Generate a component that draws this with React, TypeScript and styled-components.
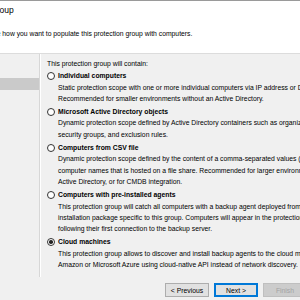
import styled, { createGlobalStyle } from "styled-components";

const GlobalStyle = createGlobalStyle`
  html, body {
    margin: 0;
    padding: 0;
    width: 300px;
    height: 300px;
    overflow: hidden;
    background: #f0f0f0;
  }
  #root {
    width: 300px;
    height: 300px;
    overflow: hidden;
  }
`;

const Window = styled.div`
  width: 514px;
  height: 300px;
  margin-left: -150px;
  display: flex;
  flex-direction: column;
  background: #f0f0f0;
  border-top: 1px solid #9a9a9a;
  font-family: "Liberation Sans", Arial, sans-serif;
  font-size: 6.8px;
  color: #000;
`;

const TitleBar = styled.div`
  height: 18px;
  display: flex;
  align-items: center;
  padding-left: 80px;
  background: #fff;
  font-size: 8.5px;
  white-space: nowrap;
`;

const Header = styled.div`
  background: #fff;
  height: 34px;
  border-bottom: 1px solid #dcdcdc;
  white-space: nowrap;
`;

const StepName = styled.div`
  padding-left: 110px;
  line-height: 9px;
  font-weight: bold;
`;

const StepText = styled.div`
  padding-left: 127px;
  line-height: 11px;
`;

const Main = styled.div`
  height: 223px;
  display: flex;
`;

const Nav = styled.div`
  width: 189px;
  padding-top: 12px;
  border-right: 1px solid #d7d7d7;
  box-shadow: 1px 0 0 #fff;
`;

const NavItem = styled.div<{ $active?: boolean }>`
  height: 12px;
  line-height: 12px;
  padding-left: 18px;
  background: ${(p) => (p.$active ? "#cacaca" : "transparent")};
`;

const Content = styled.div`
  flex: 1;
  padding: 4px 0 0 7px;
  white-space: nowrap;
  line-height: 11.3px;
`;

const Intro = styled.div`
  margin-bottom: 1px;
`;

const Option = styled.div`
  display: flex;
  margin-bottom: 2px;
`;

const Radio = styled.span<{ $checked?: boolean }>`
  width: 8px;
  height: 8px;
  margin: 1.6px 3px 0 0;
  border: 1px solid #333;
  border-radius: 50%;
  background: #fff;
  box-sizing: border-box;
  display: flex;
  align-items: center;
  justify-content: center;
  flex-shrink: 0;

  &::after {
    content: "";
    width: 3.6px;
    height: 3.6px;
    border-radius: 50%;
    background: ${(p) => (p.$checked ? "#222" : "transparent")};
  }
`;

const OptionBody = styled.div`
  display: flex;
  flex-direction: column;
`;

const OptionTitle = styled.div`
  font-weight: bold;
`;

const Footer = styled.div`
  display: flex;
  justify-content: flex-end;
  gap: 5px;
  padding: 6px 8px 0 0;
`;

const Button = styled.button<{ $focus?: boolean }>`
  width: 44px;
  height: 14px;
  padding: 0;
  font-family: inherit;
  font-size: 6.8px;
  color: ${(p) => (p.disabled ? "#a3a3a3" : "#000")};
  background: ${(p) => (p.disabled ? "#cccccc" : "#e1e1e1")};
  border: 1px solid
    ${(p) => (p.disabled ? "#bfbfbf" : p.$focus ? "#0078d7" : "#adadad")};
  box-shadow: ${(p) => (p.$focus ? "inset 0 0 0 1px #0078d7" : "none")};
`;

const options = [
  {
    title: "Individual computers",
    lines: [
      "Static protection scope with one or more individual computers via IP address or DNS name.",
      "Recommended for smaller environments without an Active Directory.",
    ],
  },
  {
    title: "Microsoft Active Directory objects",
    lines: [
      "Dynamic protection scope defined by Active Directory containers such as organizational units,",
      "security groups, and exclusion rules.",
    ],
  },
  {
    title: "Computers from CSV file",
    lines: [
      "Dynamic protection scope defined by the content of a comma-separated values (CSV) file containing",
      "computer names that is hosted on a file share. Recommended for larger environments without an",
      "Active Directory, or for CMDB integration.",
    ],
  },
  {
    title: "Computers with pre-installed agents",
    lines: [
      "This protection group will catch all computers with a backup agent deployed from the",
      "installation package specific to this group.  Computers will appear in the protection group",
      "following their first connection to the backup server.",
    ],
  },
  {
    title: "Cloud machines",
    checked: true,
    lines: [
      "This protection group allows to discover and install backup agents to the cloud machines in",
      "Amazon or Microsoft Azure using cloud-native API instead of network discovery.",
    ],
  },
];

const steps = ["Name", "Type", "Computers", "Exclusions", "Credentials", "Options", "Review", "Apply", "Summary"];

export default function App() {
  return (
    <>
      <GlobalStyle />
      <Window>
        <TitleBar>New Protection Group</TitleBar>
        <Header>
          <StepName>Type</StepName>
          <StepText>Choose how you want to populate this protection group with computers.</StepText>
        </Header>
        <Main>
          <Nav>
            {steps.map((s) => (
              <NavItem key={s} $active={s === "Type"}>
                {s}
              </NavItem>
            ))}
          </Nav>
          <Content>
            <Intro>This protection group will contain:</Intro>
            {options.map((o) => (
              <Option key={o.title}>
                <Radio $checked={o.checked} />
                <OptionBody>
                  <OptionTitle>{o.title}</OptionTitle>
                  {o.lines.map((l) => (
                    <span key={l}>{l}</span>
                  ))}
                </OptionBody>
              </Option>
            ))}
          </Content>
        </Main>
        <Footer>
          <Button>&lt; Previous</Button>
          <Button $focus>Next &gt;</Button>
          <Button disabled>Finish</Button>
          <Button>Cancel</Button>
        </Footer>
      </Window>
    </>
  );
}
